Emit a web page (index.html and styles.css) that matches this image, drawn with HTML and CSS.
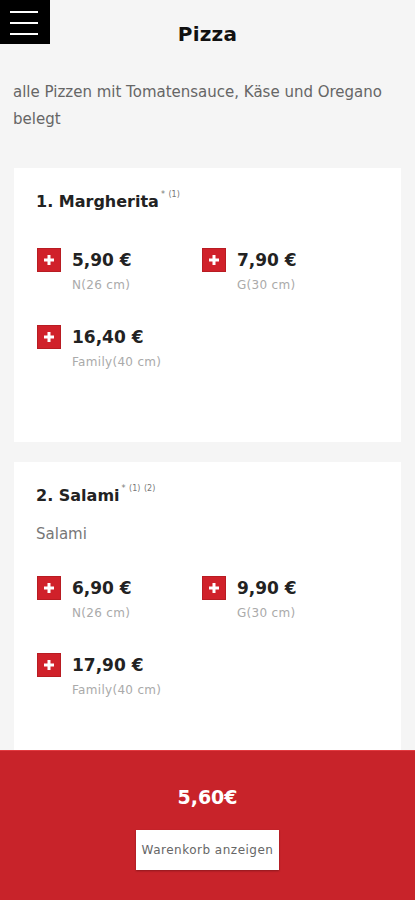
FILE: index.html
```html
<!DOCTYPE html>
<html lang="de">
<head>
    <meta charset="UTF-8">
    <title>Pizza</title>
    <link rel="stylesheet" href="styles.css">
</head>
<body>
<header class="topbar">
    <button class="menu-btn" aria-label="Menü">
        <span></span><span></span><span></span>
    </button>
    <h1 class="page-title">Pizza</h1>
</header>

<p class="intro">alle Pizzen mit Tomatensauce, Käse und Oregano belegt</p>

<main class="list">
    <section class="card">
        <h2 class="dish">1. Margherita<sup class="note">* <span>(1)</span></sup></h2>
        <div class="prices">
            <div class="price">
                <button class="add" aria-label="hinzufügen"></button>
                <div>
                    <div class="amount">5,90 €</div>
                    <div class="size">N(26 cm)</div>
                </div>
            </div>
            <div class="price">
                <button class="add" aria-label="hinzufügen"></button>
                <div>
                    <div class="amount">7,90 €</div>
                    <div class="size">G(30 cm)</div>
                </div>
            </div>
            <div class="price">
                <button class="add" aria-label="hinzufügen"></button>
                <div>
                    <div class="amount">16,40 €</div>
                    <div class="size">Family(40 cm)</div>
                </div>
            </div>
        </div>
    </section>

    <section class="card">
        <h2 class="dish">2. Salami<sup class="note">* <span>(1)</span> <span>(2)</span></sup></h2>
        <p class="desc">Salami</p>
        <div class="prices">
            <div class="price">
                <button class="add" aria-label="hinzufügen"></button>
                <div>
                    <div class="amount">6,90 €</div>
                    <div class="size">N(26 cm)</div>
                </div>
            </div>
            <div class="price">
                <button class="add" aria-label="hinzufügen"></button>
                <div>
                    <div class="amount">9,90 €</div>
                    <div class="size">G(30 cm)</div>
                </div>
            </div>
            <div class="price">
                <button class="add" aria-label="hinzufügen"></button>
                <div>
                    <div class="amount">17,90 €</div>
                    <div class="size">Family(40 cm)</div>
                </div>
            </div>
        </div>
    </section>
</main>

<footer class="cart-bar">
    <div class="total">5,60€</div>
    <button class="cart-btn">Warenkorb anzeigen</button>
</footer>
</body>
</html>
```

FILE: styles.css
```css
body {
    margin: 0;
    background: #f5f5f5;
    font-family: "DejaVu Sans", "Open Sans", sans-serif;
    color: #222;
    overflow: hidden;
    height: 900px;
}

.topbar {
    display: flex;
    align-items: flex-start;
    height: 66px;
}

.menu-btn {
    width: 50px;
    height: 44px;
    background: #000;
    border: none;
    padding: 11px 12px 0 10px;
    display: flex;
    flex-direction: column;
    gap: 9px;
    flex-shrink: 0;
}

.menu-btn span {
    display: block;
    width: 28px;
    height: 2px;
    background: #fff;
}

.page-title {
    flex: 1;
    margin: 22px 50px 0 0;
    text-align: center;
    font-size: 20px;
    font-weight: bold;
    color: #111;
    letter-spacing: 0.2px;
}

.intro {
    margin: 13px 13px 0;
    font-size: 15px;
    line-height: 27px;
    color: #666;
}

.list {
    padding: 35px 14px 0;
    display: flex;
    flex-direction: column;
    gap: 20px;
}

.card {
    background: #fff;
    padding: 21px 22px 73px;
}

.dish {
    margin: 0;
    font-size: 16px;
    line-height: 26px;
    font-weight: bold;
    color: #222;
}

.note {
    font-size: 8px;
    line-height: 0;
    font-weight: normal;
    color: #777;
    margin-left: 2px;
    vertical-align: 10px;
}

.note span {
    margin-left: 1px;
}

.desc {
    margin: 16px 0 2px;
    font-size: 15px;
    line-height: 18px;
    color: #777;
}

.prices {
    margin-top: 33px;
    display: grid;
    grid-template-columns: 165px 165px;
    row-gap: 33px;
}

.price {
    display: flex;
    align-items: flex-start;
    gap: 11px;
    margin-left: 1px;
}

.add {
    width: 24px;
    height: 24px;
    padding: 0;
    border: 1px solid #b81c22;
    background: #d0212a;
    position: relative;
    flex-shrink: 0;
}

.add::before,
.add::after {
    content: "";
    position: absolute;
    background: #fff;
    left: 50%;
    top: 50%;
    transform: translate(-50%, -50%);
}

.add::before {
    width: 10px;
    height: 3px;
}

.add::after {
    width: 3px;
    height: 10px;
}

.amount {
    font-size: 17px;
    font-weight: bold;
    line-height: 24px;
    color: #222;
}

.size {
    margin-top: 6px;
    font-size: 12px;
    line-height: 14px;
    letter-spacing: 0.3px;
    color: #aaa;
}

.cart-bar {
    position: fixed;
    left: 0;
    right: 0;
    bottom: 0;
    height: 150px;
    background: #c8232a;
    border-top: 1px solid #e23a40;
    display: flex;
    flex-direction: column;
    align-items: center;
    box-sizing: border-box;
}

.total {
    margin-top: 35px;
    font-size: 19px;
    font-weight: bold;
    color: #fff;
}

.cart-btn {
    margin-top: 22px;
    width: 143px;
    height: 40px;
    border: none;
    background: #fff;
    font-family: inherit;
    font-size: 12px;
    letter-spacing: 0.5px;
    color: #666;
    padding: 0;
    box-shadow: 0 1px 2px rgba(0, 0, 0, 0.3);
}
```
